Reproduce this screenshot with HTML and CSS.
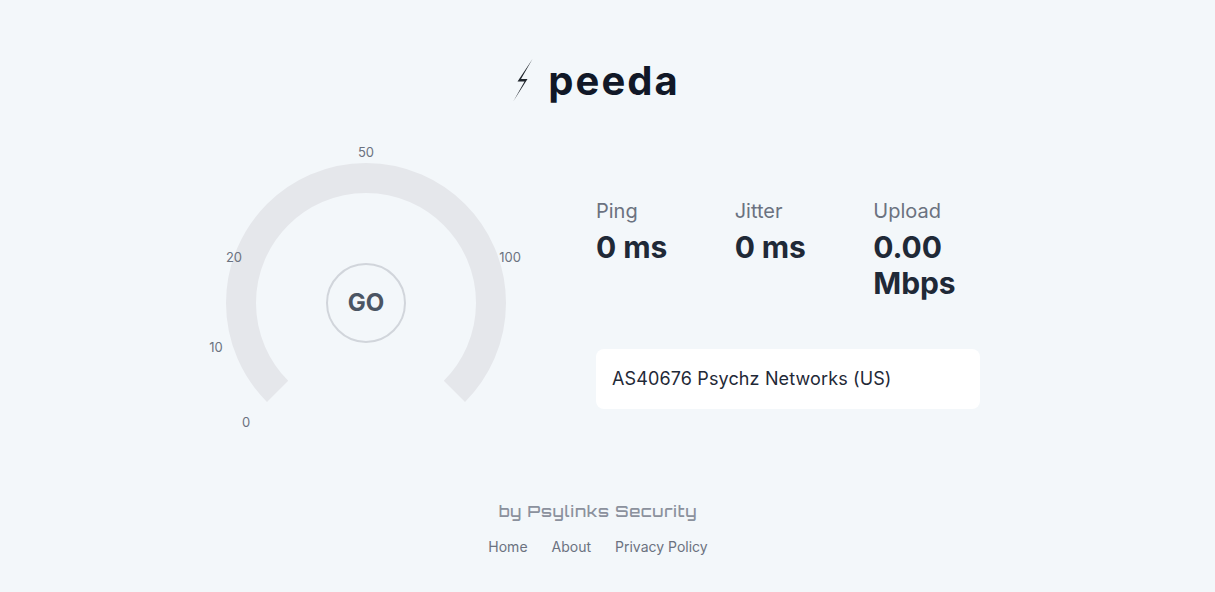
FILE: index.html
```html
<!DOCTYPE html>
<html lang="en">
<head>
	<meta charset="UTF-8">
	<title>Speeda</title>
	<link rel="stylesheet" href="styles.css">
</head>
<body>
	<header class="logo">
		<svg class="bolt" width="20" height="44" viewBox="0 0 20 44">
			<path d="M19.5 1L4.5 23.5H11.5L.5 43L14.5 21H8Z"/>
		</svg>
		<h1>peeda</h1>
	</header>

	<main class="panel">
		<div class="gauge">
			<svg class="dial" width="300" height="300" viewBox="0 0 300 300">
				<path class="track" d="M61.6 238.4A125 125 0 1 1 238.4 238.4"/>
				<text x="30" y="274">0</text>
				<text x="0" y="199">10</text>
				<text x="18" y="109">20</text>
				<text x="150" y="4">50</text>
				<text x="294" y="109">100</text>
			</svg>
			<button class="go">GO</button>
		</div>

		<div class="info">
			<dl class="stats">
				<div><dt>Ping</dt><dd>0 ms</dd></div>
				<div><dt>Jitter</dt><dd>0 ms</dd></div>
				<div><dt>Upload</dt><dd>0.00 Mbps</dd></div>
			</dl>
			<p class="isp">AS40676 Psychz Networks (US)</p>
		</div>
	</main>

	<footer class="footer">
		<p class="by">by Psylinks Security</p>
		<nav class="links">
			<a href="#">Home</a>
			<a href="#">About</a>
			<a href="#">Privacy Policy</a>
		</nav>
	</footer>
</body>
</html>
```
FILE: styles.css
```css
*{box-sizing: border-box;}
body,h1,dl,dd,p{margin: 0;padding: 0;}
body{height: 592px;padding: 56px 19px 0 0;overflow: hidden;background-color: #f3f7fa;
	font-family: Inter, sans-serif;color: #1f2937;}

.logo{display: flex;justify-content: center;align-items: center;gap: 15px;height: 48px;padding-right: 3px;}
.logo h1{padding-top: 2px;font-size: 40px;line-height: 48px;font-weight: 700;letter-spacing: 2px;color: #111827;}
.bolt{fill: #20262d;}

.panel{display: flex;justify-content: center;align-items: center;gap: 80px;margin-top: 49px;height: 300px;}
.gauge{display: grid;place-items: center;width: 300px;height: 300px;}
.dial,.go{grid-area: 1 / 1;}
.dial{display: block;overflow: visible;}
.track{fill: none;stroke: #e5e7eb;stroke-width: 30;}
.dial text{font-size: 13px;fill: #6b7280;text-anchor: middle;}
.go{width: 80px;height: 80px;padding: 0;border: 2px solid #d1d5db;border-radius: 50%;background: none;
	font: 700 24px/32px Inter, sans-serif;color: #4b5563;}

.info{width: 384px;}
.stats{display: grid;grid-template-columns: repeat(3, 1fr);gap: 32px;margin-bottom: 48px;}
.stats dt{font-size: 20px;line-height: 28px;color: #6b7280;margin-bottom: 4px;}
.stats dd{font-size: 30px;line-height: 36px;font-weight: 700;letter-spacing: -.1px;}
.isp{padding: 16px;border-radius: 8px;background-color: #fff;font-size: 18px;line-height: 28px;letter-spacing: .13px;}

.footer{margin-top: 46px;text-align: center;color: #6b7280;}
.by{font-family: Orbitron, sans-serif;font-size: 16px;line-height: 24px;font-weight: 500;color: #8b919d;letter-spacing: .8px;}
.links{display: flex;justify-content: center;gap: 24px;margin-top: 14px;}
.links a{font-size: 14px;line-height: 20px;color: #6b7280;text-decoration: none;}
```
